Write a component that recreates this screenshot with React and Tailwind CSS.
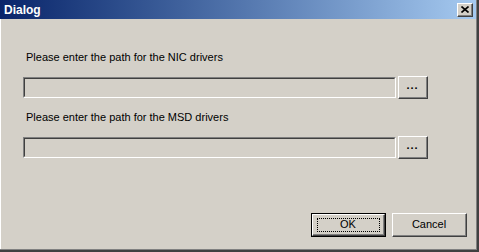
import React from "react";

const font = { fontFamily: '"Liberation Sans", Arial, sans-serif' };

const Sunken = ({ className = "" }) => (
  <div className={`border-t border-l border-[#808080] border-b border-r border-b-white border-r-white ${className}`}>
    <div className="h-full border-t border-l border-[#404040] border-b border-r border-b-[#D4D0C8] border-r-[#D4D0C8] bg-[#D4D0C8]" />
  </div>
);

const Raised = ({ className = "", children }) => (
  <div className={`border-t border-l border-white border-b border-r border-b-[#404040] border-r-[#404040] bg-[#D4D0C8] ${className}`}>
    <div className="h-full flex items-center justify-center border-b border-r border-[#808080] border-t-0 border-l-0">
      {children}
    </div>
  </div>
);

const PathRow = () => (
  <div className="flex items-center h-[23px]">
    <Sunken className="w-[373px] h-[21px]" />
    <Raised className="ml-[2px] w-[30px] h-[23px]">
      <span className="text-[11px] leading-none text-black font-bold tracking-[1px] -mt-[3px]">...</span>
    </Raised>
  </div>
);

export default function App() {
  return (
    <div className="w-[479px] h-[252px] bg-[#D4D0C8] text-black" style={font}>
      <div className="w-full h-full flex flex-col border-r-2 border-b-2 border-[#404040]">
        <div className="flex-1 flex flex-col border-r border-b border-[#808080]">
          <div className="h-[19px] flex items-center justify-between bg-gradient-to-r from-[#0A246A] to-[#A6CAF0] pl-[4px] pr-[3px]">
            <span className="text-white font-bold text-[12px] leading-none">Dialog</span>
            <Raised className="w-[16px] h-[14px]">
              <svg width="8" height="7" viewBox="0 0 8 7">
                <path d="M0.5 0.5 L7.5 6.5 M7.5 0.5 L0.5 6.5" stroke="#000" strokeWidth="1.6" />
              </svg>
            </Raised>
          </div>
          <div className="flex-1 flex flex-col border-l border-white pl-[22px]">
            <div className="mt-[31px] pl-[3px] text-[11px] leading-[14px]">
              Please enter the path for the NIC drivers
            </div>
            <div className="mt-[12px]">
              <PathRow />
            </div>
            <div className="mt-[11px] pl-[3px] text-[11px] leading-[14px]">
              Please enter the path for the MSD drivers
            </div>
            <div className="mt-[12px]">
              <PathRow />
            </div>
            <div className="mt-auto mb-[12px] flex justify-end gap-[6px] pr-[9px]">
              <div className="w-[75px] h-[24px] border border-black">
                <Raised className="w-full h-full">
                  <div className="w-[63px] h-[14px] border border-dotted border-black flex items-center justify-center text-[11px] leading-none">
                    OK
                  </div>
                </Raised>
              </div>
              <Raised className="w-[75px] h-[24px]">
                <span className="text-[11px] leading-none">Cancel</span>
              </Raised>
            </div>
          </div>
        </div>
      </div>
    </div>
  );
}
